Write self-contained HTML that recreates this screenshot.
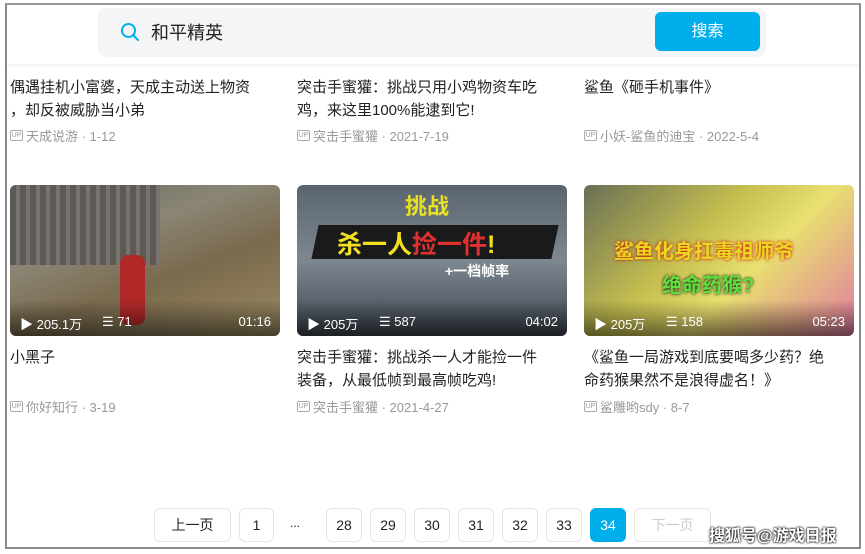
<!DOCTYPE html>
<html><head><meta charset="utf-8"><style>
*{margin:0;padding:0;box-sizing:border-box}
body{width:865px;height:554px;background:#fff;font-family:"Liberation Sans","Noto Sans CJK SC",sans-serif;position:relative;overflow:hidden;color:#222}
.frame{position:absolute;left:5px;top:3px;width:856px;height:546px;border:2px solid #8a8a8a;border-top-color:#999}
.sbar{position:absolute;left:98px;top:8px;width:668px;height:49px;background:#f4f5f7;border-radius:8px}
.sbar .q{position:absolute;left:22px;top:14px}
.sbar .t{position:absolute;left:53px;top:11px;font-size:18px;color:#222}
.btn{position:absolute;left:655px;top:12px;width:105px;height:39px;background:#00aeec;border-radius:6px;color:#fff;font-size:16px;text-align:center;line-height:39px}
.sh{position:absolute;left:7px;top:64px;width:852px;height:4px;background:linear-gradient(#f3f3f3,#fff)}
.ti{position:absolute;font-size:15px;line-height:23px;color:#222;width:250px;line-break:anywhere;word-break:break-all}
.me{position:absolute;font-size:13px;color:#999;display:flex;align-items:center;gap:3px}
.up{display:inline-block;width:13px;height:11px;border:1px solid #aaa;border-radius:2px;font-size:7px;line-height:9px;text-align:center;color:#999}
.th{position:absolute;top:185px;width:270px;height:151px;border-radius:6px;overflow:hidden}
.st{position:absolute;bottom:0;left:0;right:0;height:36px;background:linear-gradient(transparent,rgba(0,0,0,.55));color:#fff;font-size:13px}
.st span{position:absolute;top:14px}
.pg{position:absolute;top:508px;height:34px;border:1px solid #e3e5e7;border-radius:6px;font-size:14px;text-align:center;line-height:32px;color:#222;background:#fff}
</style></head><body>
<div class="frame"></div>
<div class="sbar"><svg class="q" width="20" height="20" viewBox="0 0 20 20"><circle cx="8.5" cy="8.5" r="6.5" fill="none" stroke="#00aeec" stroke-width="2"/><path d="M13 13l5 5" stroke="#00aeec" stroke-width="2" stroke-linecap="round"/></svg><div class="t">和平精英</div></div>
<div class="btn">搜索</div>
<div class="sh"></div>

<div class="ti" style="left:10px;top:76px">偶遇挂机小富婆，天成主动送上物资<br>，却反被威胁当小弟</div>
<div class="ti" style="left:297px;top:76px">突击手蜜獾：挑战只用小鸡物资车吃<br>鸡，来这里100%能逮到它!</div>
<div class="ti" style="left:584px;top:76px">鲨鱼《砸手机事件》</div>
<div class="me" style="left:10px;top:126px"><span class="up">UP</span>天成说游 · 1-12</div>
<div class="me" style="left:297px;top:126px"><span class="up">UP</span>突击手蜜獾 · 2021-7-19</div>
<div class="me" style="left:584px;top:126px"><span class="up">UP</span>小妖-鲨鱼的迪宝 · 2022-5-4</div>

<div class="th" style="left:10px;background:linear-gradient(160deg,#6a6a62 0%,#8a8574 35%,#7a6a4e 60%,#9a8a62 100%)">
<div style="position:absolute;left:0;top:0;width:150px;height:80px;background:repeating-linear-gradient(90deg,#5d5a55 0 6px,#77736c 6px 10px)"></div>
<div style="position:absolute;left:110px;top:70px;width:25px;height:70px;background:#b02828;border-radius:8px"></div>
<div class="st"><span style="left:10px">▶ 205.1万</span><span style="left:92px">☰ 71</span><span style="right:9px">01:16</span></div></div>
<div class="th" style="left:297px;background:linear-gradient(180deg,#5a6570 0%,#7d8790 50%,#3e4650 100%)">
<div style="position:absolute;left:108px;top:4px;font-size:22px;font-weight:bold;color:#e8e020">挑战</div>
<div style="position:absolute;left:18px;top:40px;width:240px;height:34px;background:#1a1a1a;transform:skewX(-12deg)"></div>
<div style="position:absolute;left:40px;top:40px;font-size:25px;font-weight:bold;color:#f0e020">杀一人<span style="color:#e03030">捡一件</span>!</div>
<div style="position:absolute;left:148px;top:76px;font-size:14px;font-weight:bold;color:#fff">+一档帧率</div>
<div class="st"><span style="left:10px">▶ 205万</span><span style="left:82px">☰ 587</span><span style="right:9px">04:02</span></div></div>
<div class="th" style="left:584px;background:linear-gradient(135deg,#6a6f55 0%,#c6c050 40%,#e8e070 60%,#e07aa0 100%)">
<div style="position:absolute;left:30px;top:50px;font-size:20px;font-weight:bold;color:#e8d820;text-shadow:0 0 3px #c00">鲨鱼化身扛毒祖师爷</div>
<div style="position:absolute;left:78px;top:84px;font-size:20px;font-weight:bold;color:#60e040;text-shadow:0 0 3px #000">绝命药猴?</div>
<div class="st"><span style="left:10px">▶ 205万</span><span style="left:82px">☰ 158</span><span style="right:9px">05:23</span></div></div>

<div class="ti" style="left:10px;top:346px">小黑子</div>
<div class="ti" style="left:297px;top:346px">突击手蜜獾：挑战杀一人才能捡一件<br>装备，从最低帧到最高帧吃鸡!</div>
<div class="ti" style="left:584px;top:346px">《鲨鱼一局游戏到底要喝多少药？绝<br>命药猴果然不是浪得虚名！》</div>
<div class="me" style="left:10px;top:397px"><span class="up">UP</span>你好知行 · 3-19</div>
<div class="me" style="left:297px;top:397px"><span class="up">UP</span>突击手蜜獾 · 2021-4-27</div>
<div class="me" style="left:584px;top:397px"><span class="up">UP</span>鲨雕哟sdy · 8-7</div>

<div class="pg" style="left:154px;width:77px">上一页</div>
<div class="pg" style="left:239px;width:35px">1</div>
<div style="position:absolute;left:290px;top:516px;font-size:12px">...</div>
<div class="pg" style="left:326px;width:36px">28</div>
<div class="pg" style="left:370px;width:36px">29</div>
<div class="pg" style="left:414px;width:36px">30</div>
<div class="pg" style="left:458px;width:36px">31</div>
<div class="pg" style="left:502px;width:36px">32</div>
<div class="pg" style="left:546px;width:36px">33</div>
<div class="pg" style="left:590px;width:36px;background:#00aeec;border-color:#00aeec;color:#fff">34</div>
<div class="pg" style="left:634px;width:77px;color:#ccc">下一页</div>
<div style="position:absolute;left:709px;top:522px;font-size:16px;font-weight:bold;color:#fff;text-shadow:0 0 2px #000,0 0 2px #000">搜狐号@游戏日报</div>
</body></html>
